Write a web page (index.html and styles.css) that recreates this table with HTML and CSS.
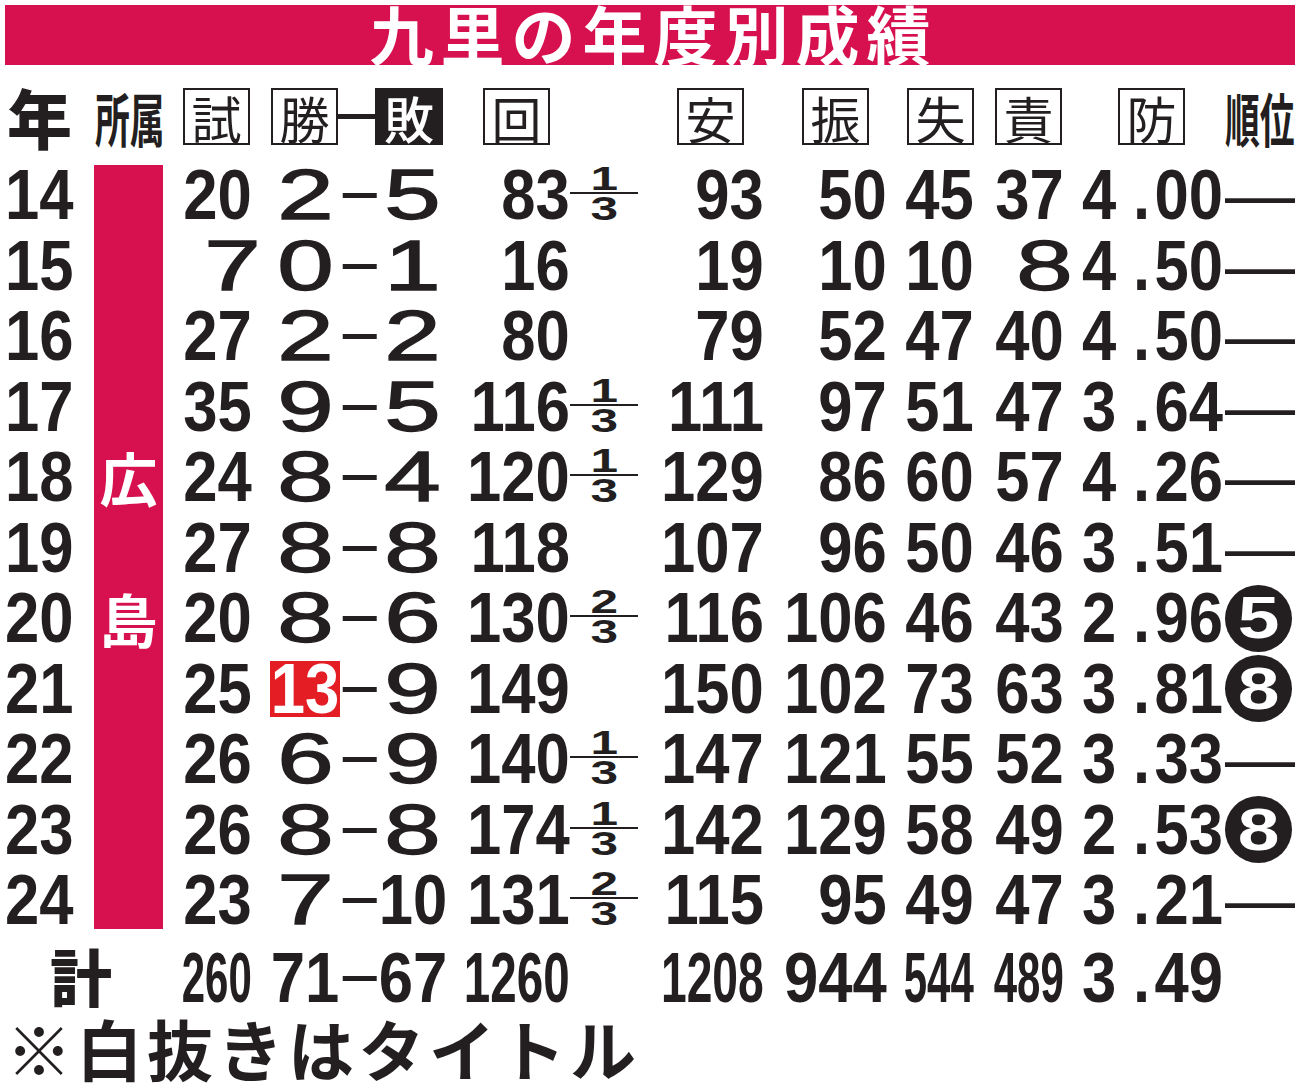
FILE: index.html
```html
<!DOCTYPE html>
<html lang="ja">
<head>
<meta charset="utf-8">
<title>九里の年度別成績</title>
<link rel="stylesheet" href="styles.css">
</head>
<body>
<div class="page">
  <h1 class="title">九里の年度別成績</h1>
  <div class="table">
    <div class="hd hd-year">年</div>
    <div class="hd hd-team"><span class="squeeze">所属</span></div>
    <div class="hd hd-g"><span class="box">試</span></div>
    <div class="hd hd-w"><span class="box">勝</span></div>
    <div class="hd hd-dash"><span class="hline"></span></div>
    <div class="hd hd-l"><span class="box inv">敗</span></div>
    <div class="hd hd-ip"><span class="box">回</span></div>
    <div class="hd"></div>
    <div class="hd hd-h"><span class="box">安</span></div>
    <div class="hd hd-so"><span class="box">振</span></div>
    <div class="hd hd-bb"><span class="box">失</span></div>
    <div class="hd hd-er"><span class="box">責</span></div>
    <div class="hd hd-era"><span class="box">防</span></div>
    <div class="hd hd-rank"><span class="squeeze">順位</span></div>

    <div class="c yr"><span class="n">14</span></div>
    <div class="team"><div class="bar"><span class="t1">広</span><span class="t2">島</span></div></div>
    <div class="c g"><span class="n">20</span></div><div class="c w"><span class="wd">2</span></div><div class="c d">−</div><div class="c l"><span class="wd">5</span></div>
    <div class="c ip"><span class="n">83</span></div><div class="c fr"><span class="frac"><span class="nu"><span class="fd">1</span></span><span class="de"><span class="fd">3</span></span></span></div>
    <div class="c h"><span class="n">93</span></div><div class="c so"><span class="n">50</span></div><div class="c bb"><span class="n">45</span></div><div class="c er"><span class="n">37</span></div>
    <div class="c era"><span class="n">4<span class="dot">.</span>00</span></div><div class="c rk">—</div>

    <div class="c yr"><span class="n">15</span></div>
    <div class="c g"><span class="wd">7</span></div><div class="c w"><span class="wd">0</span></div><div class="c d">−</div><div class="c l"><span class="wd">1</span></div>
    <div class="c ip"><span class="n">16</span></div><div class="c fr"></div>
    <div class="c h"><span class="n">19</span></div><div class="c so"><span class="n">10</span></div><div class="c bb"><span class="n">10</span></div><div class="c er"><span class="wd">8</span></div>
    <div class="c era"><span class="n">4<span class="dot">.</span>50</span></div><div class="c rk">—</div>

    <div class="c yr"><span class="n">16</span></div>
    <div class="c g"><span class="n">27</span></div><div class="c w"><span class="wd">2</span></div><div class="c d">−</div><div class="c l"><span class="wd">2</span></div>
    <div class="c ip"><span class="n">80</span></div><div class="c fr"></div>
    <div class="c h"><span class="n">79</span></div><div class="c so"><span class="n">52</span></div><div class="c bb"><span class="n">47</span></div><div class="c er"><span class="n">40</span></div>
    <div class="c era"><span class="n">4<span class="dot">.</span>50</span></div><div class="c rk">—</div>

    <div class="c yr"><span class="n">17</span></div>
    <div class="c g"><span class="n">35</span></div><div class="c w"><span class="wd">9</span></div><div class="c d">−</div><div class="c l"><span class="wd">5</span></div>
    <div class="c ip"><span class="n">116</span></div><div class="c fr"><span class="frac"><span class="nu"><span class="fd">1</span></span><span class="de"><span class="fd">3</span></span></span></div>
    <div class="c h"><span class="n">111</span></div><div class="c so"><span class="n">97</span></div><div class="c bb"><span class="n">51</span></div><div class="c er"><span class="n">47</span></div>
    <div class="c era"><span class="n">3<span class="dot">.</span>64</span></div><div class="c rk">—</div>

    <div class="c yr"><span class="n">18</span></div>
    <div class="c g"><span class="n">24</span></div><div class="c w"><span class="wd">8</span></div><div class="c d">−</div><div class="c l"><span class="wd">4</span></div>
    <div class="c ip"><span class="n">120</span></div><div class="c fr"><span class="frac"><span class="nu"><span class="fd">1</span></span><span class="de"><span class="fd">3</span></span></span></div>
    <div class="c h"><span class="n">129</span></div><div class="c so"><span class="n">86</span></div><div class="c bb"><span class="n">60</span></div><div class="c er"><span class="n">57</span></div>
    <div class="c era"><span class="n">4<span class="dot">.</span>26</span></div><div class="c rk">—</div>

    <div class="c yr"><span class="n">19</span></div>
    <div class="c g"><span class="n">27</span></div><div class="c w"><span class="wd">8</span></div><div class="c d">−</div><div class="c l"><span class="wd">8</span></div>
    <div class="c ip"><span class="n">118</span></div><div class="c fr"></div>
    <div class="c h"><span class="n">107</span></div><div class="c so"><span class="n">96</span></div><div class="c bb"><span class="n">50</span></div><div class="c er"><span class="n">46</span></div>
    <div class="c era"><span class="n">3<span class="dot">.</span>51</span></div><div class="c rk">—</div>

    <div class="c yr"><span class="n">20</span></div>
    <div class="c g"><span class="n">20</span></div><div class="c w"><span class="wd">8</span></div><div class="c d">−</div><div class="c l"><span class="wd">6</span></div>
    <div class="c ip"><span class="n">130</span></div><div class="c fr"><span class="frac"><span class="nu"><span class="fd">2</span></span><span class="de"><span class="fd">3</span></span></span></div>
    <div class="c h"><span class="n">116</span></div><div class="c so"><span class="n">106</span></div><div class="c bb"><span class="n">46</span></div><div class="c er"><span class="n">43</span></div>
    <div class="c era"><span class="n">2<span class="dot">.</span>96</span></div><div class="c rk"><span class="circ"><span class="cd">5</span></span></div>

    <div class="c yr"><span class="n">21</span></div>
    <div class="c g"><span class="n">25</span></div><div class="c w"><span class="hl"><span class="n">13</span></span></div><div class="c d">−</div><div class="c l"><span class="wd">9</span></div>
    <div class="c ip"><span class="n">149</span></div><div class="c fr"></div>
    <div class="c h"><span class="n">150</span></div><div class="c so"><span class="n">102</span></div><div class="c bb"><span class="n">73</span></div><div class="c er"><span class="n">63</span></div>
    <div class="c era"><span class="n">3<span class="dot">.</span>81</span></div><div class="c rk"><span class="circ"><span class="cd">8</span></span></div>

    <div class="c yr"><span class="n">22</span></div>
    <div class="c g"><span class="n">26</span></div><div class="c w"><span class="wd">6</span></div><div class="c d">−</div><div class="c l"><span class="wd">9</span></div>
    <div class="c ip"><span class="n">140</span></div><div class="c fr"><span class="frac"><span class="nu"><span class="fd">1</span></span><span class="de"><span class="fd">3</span></span></span></div>
    <div class="c h"><span class="n">147</span></div><div class="c so"><span class="n">121</span></div><div class="c bb"><span class="n">55</span></div><div class="c er"><span class="n">52</span></div>
    <div class="c era"><span class="n">3<span class="dot">.</span>33</span></div><div class="c rk">—</div>

    <div class="c yr"><span class="n">23</span></div>
    <div class="c g"><span class="n">26</span></div><div class="c w"><span class="wd">8</span></div><div class="c d">−</div><div class="c l"><span class="wd">8</span></div>
    <div class="c ip"><span class="n">174</span></div><div class="c fr"><span class="frac"><span class="nu"><span class="fd">1</span></span><span class="de"><span class="fd">3</span></span></span></div>
    <div class="c h"><span class="n">142</span></div><div class="c so"><span class="n">129</span></div><div class="c bb"><span class="n">58</span></div><div class="c er"><span class="n">49</span></div>
    <div class="c era"><span class="n">2<span class="dot">.</span>53</span></div><div class="c rk"><span class="circ"><span class="cd">8</span></span></div>

    <div class="c yr"><span class="n">24</span></div>
    <div class="c g"><span class="n">23</span></div><div class="c w"><span class="wd">7</span></div><div class="c d">−</div><div class="c l"><span class="n">10</span></div>
    <div class="c ip"><span class="n">131</span></div><div class="c fr"><span class="frac"><span class="nu"><span class="fd">2</span></span><span class="de"><span class="fd">3</span></span></span></div>
    <div class="c h"><span class="n">115</span></div><div class="c so"><span class="n">95</span></div><div class="c bb"><span class="n">49</span></div><div class="c er"><span class="n">47</span></div>
    <div class="c era"><span class="n">3<span class="dot">.</span>21</span></div><div class="c rk">—</div>

    <div class="c tot-label">計</div>
    <div class="c g tot"><span class="n s57">260</span></div><div class="c w tot"><span class="n">71</span></div><div class="c d tot">−</div><div class="c l tot"><span class="n">67</span></div>
    <div class="c ip tot"><span class="n s66">1260</span></div><div class="c fr tot"></div>
    <div class="c h tot"><span class="n s64">1208</span></div><div class="c so tot"><span class="n">944</span></div><div class="c bb tot"><span class="n s57">544</span></div><div class="c er tot"><span class="n s57">489</span></div>
    <div class="c era tot"><span class="n">3<span class="dot">.</span>49</span></div><div class="c rk tot"></div>
  </div>
  <p class="note">※白抜きはタイトル</p>
</div>
</body>
</html>
```

FILE: styles.css
```css
* { box-sizing: border-box; margin: 0; padding: 0; }

html, body {
  background: #ffffff;
}

body {
  width: 1300px;
  height: 1092px;
  overflow: hidden;
  color: #231f20;
  font-family: "Liberation Sans", Arial, sans-serif;
}

.page {
  padding-top: 5px;
}

.title {
  margin: 0 5px;
  height: 60px;
  background: #d7104f;
  color: #ffffff;
  font-family: "Noto Sans CJK JP", sans-serif;
  font-weight: 700;
  font-size: 64px;
  line-height: 54px;
  letter-spacing: 7px;
  padding-left: 7px;
  text-align: center;
  white-space: nowrap;
  overflow: hidden;
}

.table {
  margin-top: 15px;
  display: grid;
  grid-template-columns: 86px 90px 94px 70px 40px 65px 125px 75px 120px 123px 87px 90px 160px 75px;
  grid-template-rows: 80px repeat(11, 70.5px) 80px;
}

/* header */
.hd {
  display: flex;
  align-items: center;
  padding-bottom: 7px;
  font-family: "Noto Sans CJK JP", sans-serif;
  white-space: nowrap;
}

.hd-year {
  padding-left: 7px;
  font-size: 65px;
  font-weight: 900;
  line-height: 1;
}

.hd-team {
  padding-left: 9px;
}

.squeeze {
  display: inline-block;
  font-size: 58px;
  font-weight: 700;
  line-height: 1;
  transform: scaleX(0.6);
  transform-origin: left center;
}

.box {
  display: inline-flex;
  align-items: center;
  justify-content: center;
  width: 67px;
  height: 57px;
  border: 2px solid #231f20;
  font-size: 50px;
  font-weight: 400;
  line-height: 1;
}

.box.inv {
  width: 68px;
  background: #231f20;
  color: #ffffff;
  font-weight: 500;
}

.hd-g .box { margin-left: 7px; }
.hd-w .box { margin-left: 1px; }
.hd-dash .hline {
  display: block;
  margin-left: -2px;
  width: 38px;
  height: 5px;
  background: #231f20;
}
.hd-l .box { margin-left: -5px; }
.hd-ip .box { margin-left: 38px; }
.hd-h .box { margin-left: 32px; }
.hd-so .box { margin-left: 37px; }
.hd-bb .box { margin-left: 19px; }
.hd-er .box { margin-left: 20px; }
.hd-era .box { margin-left: 53px; }

/* data cells */
.c {
  display: flex;
  align-items: center;
  font-size: 70px;
  font-weight: 700;
  line-height: 1;
  white-space: nowrap;
}

.n {
  display: inline-block;
  font-weight: 700;
  transform: scaleX(0.88);
}

.yr { padding-left: 5px; }
.yr .n { transform-origin: left center; }
.g { justify-content: flex-end; padding-right: 18px; }
.w { justify-content: center; }
.d {
  justify-content: center;
  font-weight: 400;
}
.l { justify-content: center; }
.ip { justify-content: flex-end; }
.g .n, .ip .n, .h .n, .so .n, .bb .n, .er .n { transform-origin: right center; }
.fr { padding-left: 0; }
.h { justify-content: flex-end; padding-right: 1px; }
.so { justify-content: flex-end; padding-right: 1px; }
.bb { justify-content: flex-end; padding-right: 1px; }
.er { justify-content: flex-end; padding-right: 1px; }
.era { padding-left: 17px; }
.era .n { transform-origin: left center; }
.rk {
  font-weight: 400;
}

.dot {
  margin: 0 5px 0 19px;
}

.wd {
  display: inline-block;
  font-weight: 400;
  -webkit-text-stroke: 1.3px #231f20;
  transform: scaleX(1.45);
}

.hl {
  display: flex;
  align-items: center;
  justify-content: center;
  width: 70px;
  height: 56px;
  background: #e41d25;
  color: #ffffff;
}

/* fraction */
.frac {
  display: inline-flex;
  flex-direction: column;
  align-items: center;
  width: 68px;
  margin-top: -3px;
  font-weight: 700;
  font-size: 33px;
  line-height: 25px;
}

.nu {
  display: block;
  width: 100%;
  text-align: center;
  border-bottom: 2px solid #231f20;
  padding-bottom: 1px;
}

.de {
  display: block;
  text-align: center;
  padding-top: 2px;
}

.fd {
  display: inline-block;
  transform: scaleX(1.5);
}

/* rank circle */
.circ {
  display: flex;
  align-items: center;
  justify-content: center;
  width: 67px;
  height: 67px;
  border-radius: 50%;
  background: #231f20;
  color: #ffffff;
}

.cd {
  display: inline-block;
  font-weight: 700;
  font-size: 60px;
  transform: scaleX(1.25);
}

/* team bar */
.team {
  grid-row: span 11;
  padding: 5px 0 7px 8px;
}

.bar {
  display: grid;
  grid-template-rows: 65.5px repeat(10, 70.5px);
  width: 69px;
  height: 100%;
  background: #d7104f;
  color: #ffffff;
  font-family: "Noto Sans CJK JP", sans-serif;
  font-weight: 700;
  font-size: 58px;
  line-height: 1;
  justify-items: center;
  align-items: center;
}

.t1 { grid-row: 5; }
.t2 { grid-row: 7; }

/* totals */
.tot { padding-top: 6px; line-height: 0.85; }

.tot-label {
  grid-column: span 2;
  padding-left: 50px;
  padding-top: 0;
  font-family: "Noto Sans CJK JP", sans-serif;
  font-weight: 900;
  font-size: 62px;
  line-height: 0.9;
}

.n.s57 { transform: scaleX(0.6); }
.n.s64 { transform: scaleX(0.66); }
.n.s66 { transform: scaleX(0.68); }

.note {
  margin-top: 0;
  padding-left: 6px;
  font-family: "Noto Sans CJK JP", sans-serif;
  font-weight: 700;
  font-size: 66px;
  line-height: 62px;
  letter-spacing: 4.5px;
  white-space: nowrap;
}
```
